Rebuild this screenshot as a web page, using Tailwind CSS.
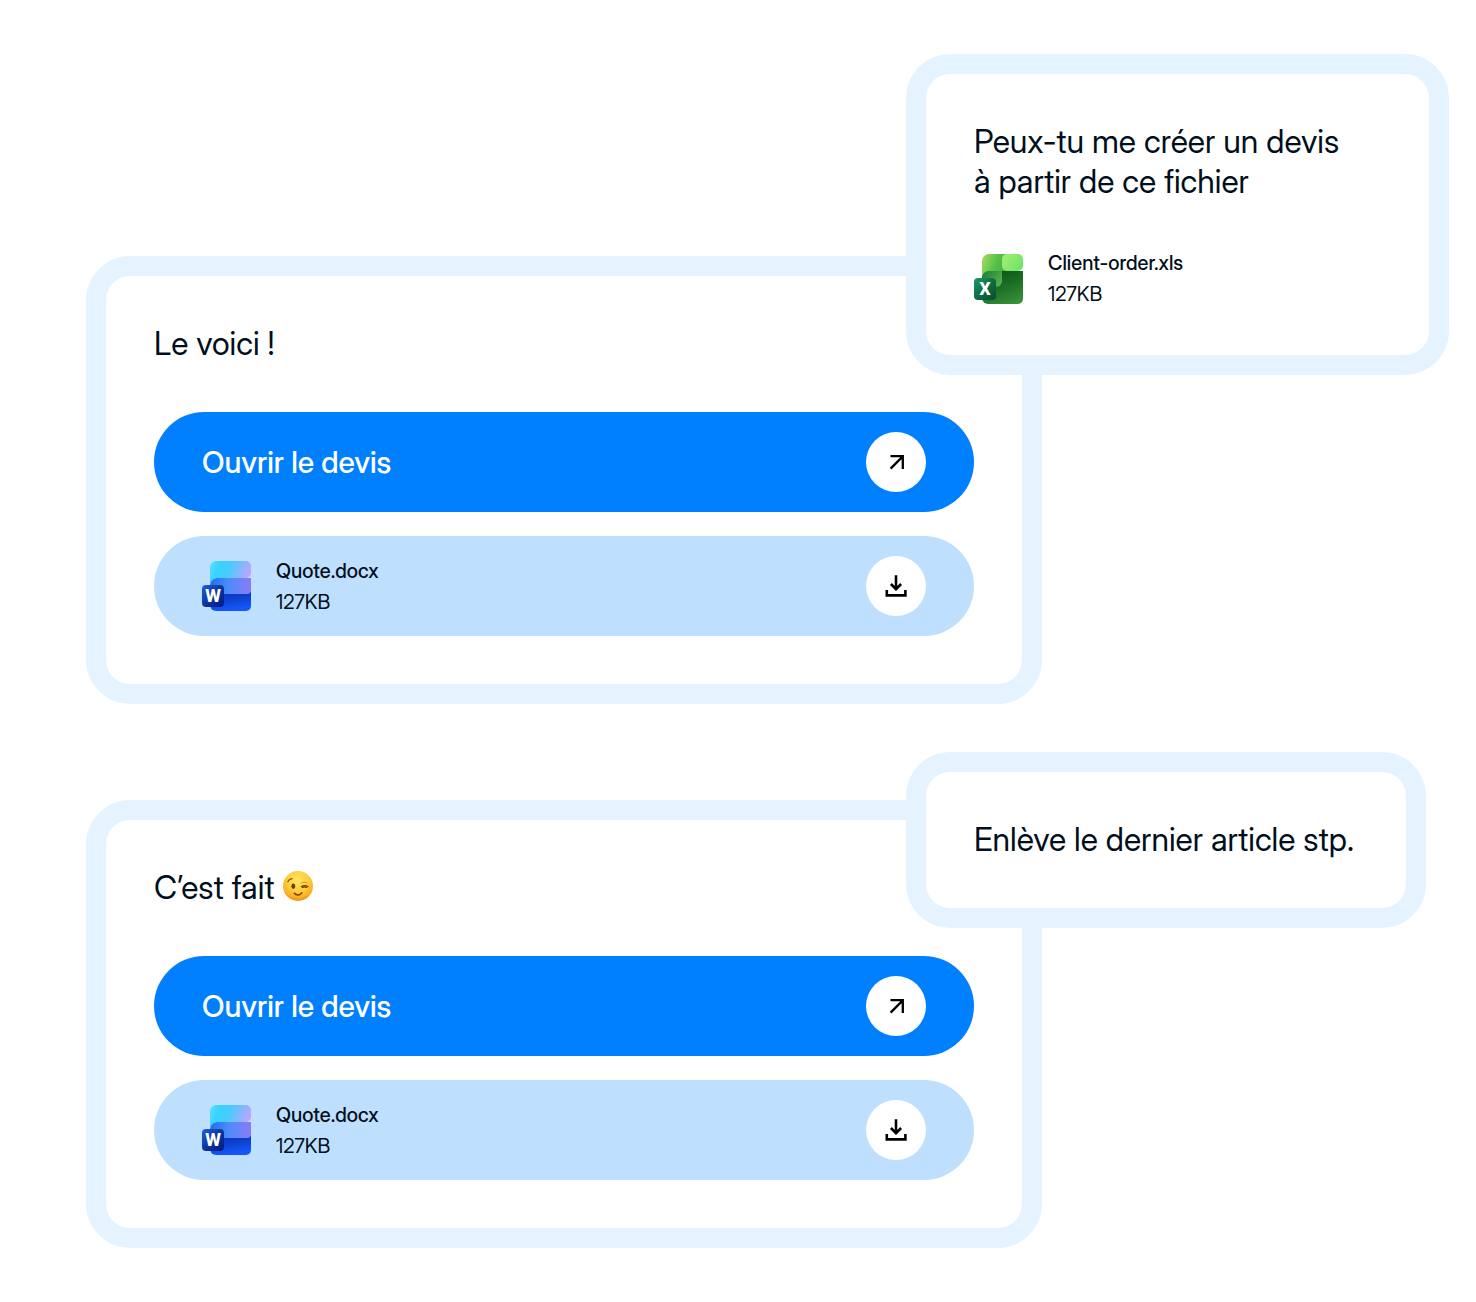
<!DOCTYPE html>
<html lang="fr">
<head>
  <meta charset="UTF-8">
  <meta name="viewport" content="width=device-width, initial-scale=1.0">
  <title>Devis - Conversation</title>
  <script src="https://cdn.jsdelivr.net/npm/@tailwindcss/browser@4"></script>
</head>
<body class="bg-white text-[#010f1c] font-['Inter_Display','Inter',sans-serif]">
  <!-- Shared icons -->
  <svg class="absolute size-0" aria-hidden="true">
    <defs>
      <linearGradient id="wordTop" x1="0" y1="0" x2="1" y2="0.2">
        <stop offset="0" stop-color="#5fe0ff"/>
        <stop offset="0.25" stop-color="#38d2ff"/>
        <stop offset="0.5" stop-color="#45ccff"/>
        <stop offset="1" stop-color="#b4a8fb"/>
      </linearGradient>
      <linearGradient id="wordMid" x1="0" y1="0" x2="1" y2="0">
        <stop offset="0" stop-color="#1f6ff0"/>
        <stop offset="0.45" stop-color="#4b8cf8"/>
        <stop offset="1" stop-color="#8a7bf7"/>
      </linearGradient>
      <linearGradient id="wordLow" x1="0" y1="0" x2="0.3" y2="1">
        <stop offset="0" stop-color="#0a35b8"/>
        <stop offset="0.4" stop-color="#0b3cc6"/>
        <stop offset="1" stop-color="#1557fa"/>
      </linearGradient>
      <linearGradient id="wordBadge" x1="0" y1="0" x2="1" y2="1">
        <stop offset="0" stop-color="#2163d8"/>
        <stop offset="0.5" stop-color="#0b36a0"/>
        <stop offset="1" stop-color="#021a86"/>
      </linearGradient>
      <linearGradient id="xlsTop" x1="0" y1="0" x2="1" y2="0.3">
        <stop offset="0" stop-color="#a8dd60"/>
        <stop offset="0.6" stop-color="#55c04a"/>
        <stop offset="1" stop-color="#46b143"/>
      </linearGradient>
      <linearGradient id="xlsTile" x1="0" y1="0" x2="1" y2="0.6">
        <stop offset="0" stop-color="#a9ee70"/>
        <stop offset="1" stop-color="#6fe56a"/>
      </linearGradient>
      <linearGradient id="xlsMid" x1="0" y1="0" x2="1" y2="0.6">
        <stop offset="0" stop-color="#1d7a35"/>
        <stop offset="1" stop-color="#4fb04c"/>
      </linearGradient>
      <linearGradient id="xlsLow" x1="0.3" y1="0" x2="0.8" y2="1">
        <stop offset="0" stop-color="#0c541b"/>
        <stop offset="0.45" stop-color="#1c6d24"/>
        <stop offset="1" stop-color="#37923a"/>
      </linearGradient>
      <linearGradient id="xlsBadge" x1="0" y1="0" x2="1" y2="1">
        <stop offset="0" stop-color="#1b9b62"/>
        <stop offset="0.5" stop-color="#0f6d42"/>
        <stop offset="1" stop-color="#0a4a2c"/>
      </linearGradient>
      <radialGradient id="winkFace" cx="0.5" cy="0.32" r="0.68">
        <stop offset="0" stop-color="#ffe45c"/>
        <stop offset="0.5" stop-color="#ffcf3d"/>
        <stop offset="0.82" stop-color="#fbb022"/>
        <stop offset="1" stop-color="#ef8a16"/>
      </radialGradient>
    </defs>
    <symbol id="icon-word" viewBox="0 0 50 50">
      <path d="M8 30H49V45a5 5 0 0 1-5 5H14a6 6 0 0 1-6-6Z" fill="url(#wordLow)"/>
      <path d="M8 24a7 7 0 0 1 7-7H49V29a4 4 0 0 1-4 4H8Z" fill="url(#wordMid)"/>
      <path d="M8 6a6 6 0 0 1 6-6H44a5 5 0 0 1 5 5V12a5 5 0 0 1-5 5H15a7 7 0 0 0-7 6Z" fill="url(#wordTop)"/>
      <rect x="0" y="24" width="22" height="22" rx="4" fill="url(#wordBadge)"/>
    </symbol>
    <symbol id="icon-excel" viewBox="0 0 50 50">
      <path d="M8 17H49V45a5 5 0 0 1-5 5H14a6 6 0 0 1-6-6Z" fill="url(#xlsLow)"/>
      <path d="M8 24a7 7 0 0 1 7-7H28V27a6 6 0 0 1-6 6H8Z" fill="url(#xlsMid)"/>
      <path d="M8 7a7 7 0 0 1 7-7H34V17H15a7 7 0 0 0-7 6Z" fill="url(#xlsTop)"/>
      <rect x="28" y="0" width="21" height="17" rx="5" fill="url(#xlsTile)"/>
      <rect x="0" y="24" width="22" height="22" rx="4" fill="url(#xlsBadge)"/>
    </symbol>
    <symbol id="icon-open" viewBox="0 0 24 24">
      <path d="M6.6 18.6 18.8 6.4M6.5 6.2H18.8V19" fill="none" stroke="#000" stroke-width="2.3"/>
    </symbol>
    <symbol id="icon-download" viewBox="0 0 24 24">
      <path d="M12 1.3V15M6.9 10 12 15.1 17.1 10M2.8 16V21.4H21.4V16" fill="none" stroke="#000" stroke-width="2.6"/>
    </symbol>
    <symbol id="icon-wink" viewBox="0 0 30 30">
      <circle cx="15" cy="15" r="15" fill="url(#winkFace)"/>
      <path d="M4.8 10.8C5.8 8.8 7.3 7.9 9 7.7" fill="none" stroke="#8a4a08" stroke-width="1.2" stroke-linecap="round"/>
      <ellipse cx="10.3" cy="15.2" rx="1.9" ry="2.7" fill="#6b3505"/>
      <path d="M18.3 15.7C20.3 14.2 22.8 14.2 25 15.7M19.5 16.5C21 15.6 22.5 15.7 23.5 16.4" fill="none" stroke="#6b3505" stroke-width="1.2" stroke-linecap="round"/>
      <path d="M18 12.2C20 11 22 11 24 12" fill="none" stroke="#c9821a" stroke-width="0.8" stroke-linecap="round"/>
      <path d="M11.3 22.3C13.5 24.8 17 24.5 18.8 21.8" fill="none" stroke="#7a3f06" stroke-width="1.5" stroke-linecap="round"/>
    </symbol>
  </svg>

  <main class="flex flex-col items-start pt-[54px] pb-[54px] pl-[86px]">
    <!-- User message with attachment -->
    <section class="relative z-10 ml-[820px] w-full max-w-[543px] rounded-[44px] border-20 border-[#e5f3ff] bg-white p-12">
      <p class="text-[32px] leading-10">Peux-tu me créer un devis<br>à partir de ce fichier</p>
      <div class="mt-12 flex items-center gap-6">
        <svg class="size-[50px]" viewBox="0 0 50 50" aria-hidden="true">
          <use href="#icon-excel"/>
          <text x="11" y="41" text-anchor="middle" class="fill-white font-[Roboto,sans-serif] text-[18px] font-extrabold">X</text>
        </svg>
        <div class="flex flex-col gap-[5px] text-[20px] leading-[26px]">
          <p class="font-medium">Client-order.xls</p>
          <p>127KB</p>
        </div>
      </div>
    </section>

    <!-- Reply -->
    <section class="-mt-[119px] w-full max-w-[956px] rounded-[44px] border-20 border-[#e5f3ff] bg-white p-12">
      <p class="text-[32px] leading-10">Le voici !</p>
      <div class="mt-12 flex flex-col gap-6">
        <a href="#devis" class="flex h-[100px] items-center justify-between rounded-full bg-[#0080ff] px-12 text-white">
          <span class="text-[30px] leading-10 font-medium">Ouvrir le devis</span>
          <span class="flex size-[60px] items-center justify-center rounded-full bg-white">
            <svg class="size-6" aria-hidden="true"><use href="#icon-open"/></svg>
          </span>
        </a>
        <div class="flex h-[100px] items-center gap-6 rounded-full bg-[#bfdfff] px-12">
          <svg class="size-[50px]" viewBox="0 0 50 50" aria-hidden="true">
            <use href="#icon-word"/>
            <text x="11" y="41" text-anchor="middle" class="fill-white font-[Roboto,sans-serif] text-[18px] font-extrabold">W</text>
          </svg>
          <div class="flex flex-col gap-[5px] text-[20px] leading-[26px]">
            <p class="font-medium">Quote.docx</p>
            <p>127KB</p>
          </div>
          <button type="button" aria-label="Télécharger" class="ml-auto flex size-[60px] items-center justify-center rounded-full bg-white">
            <svg class="size-6" aria-hidden="true"><use href="#icon-download"/></svg>
          </button>
        </div>
      </div>
    </section>

    <!-- User message -->
    <section class="relative z-10 mt-12 ml-[820px] w-full max-w-[520px] rounded-[44px] border-20 border-[#e5f3ff] bg-white p-12">
      <p class="text-[32px] leading-10">Enlève le dernier article stp.</p>
    </section>

    <!-- Reply -->
    <section class="-mt-32 w-full max-w-[956px] rounded-[44px] border-20 border-[#e5f3ff] bg-white p-12">
      <p class="flex items-center gap-2 text-[32px] leading-10">
        C’est fait
        <svg class="mb-1 size-[30px]" role="img" aria-label="Clin d’œil"><use href="#icon-wink"/></svg>
      </p>
      <div class="mt-12 flex flex-col gap-6">
        <a href="#devis" class="flex h-[100px] items-center justify-between rounded-full bg-[#0080ff] px-12 text-white">
          <span class="text-[30px] leading-10 font-medium">Ouvrir le devis</span>
          <span class="flex size-[60px] items-center justify-center rounded-full bg-white">
            <svg class="size-6" aria-hidden="true"><use href="#icon-open"/></svg>
          </span>
        </a>
        <div class="flex h-[100px] items-center gap-6 rounded-full bg-[#bfdfff] px-12">
          <svg class="size-[50px]" viewBox="0 0 50 50" aria-hidden="true">
            <use href="#icon-word"/>
            <text x="11" y="41" text-anchor="middle" class="fill-white font-[Roboto,sans-serif] text-[18px] font-extrabold">W</text>
          </svg>
          <div class="flex flex-col gap-[5px] text-[20px] leading-[26px]">
            <p class="font-medium">Quote.docx</p>
            <p>127KB</p>
          </div>
          <button type="button" aria-label="Télécharger" class="ml-auto flex size-[60px] items-center justify-center rounded-full bg-white">
            <svg class="size-6" aria-hidden="true"><use href="#icon-download"/></svg>
          </button>
        </div>
      </div>
    </section>
  </main>
</body>
</html>
